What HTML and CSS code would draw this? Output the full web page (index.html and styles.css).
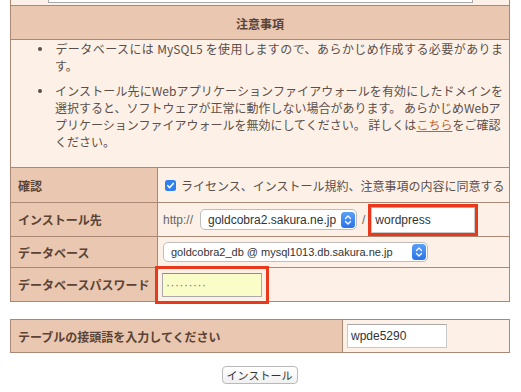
FILE: index.html
```html
<!DOCTYPE html>
<html lang="ja">
<head>
<meta charset="utf-8">
<title>インストール</title>
<link rel="stylesheet" href="styles.css">
</head>
<body>
<div class="page">
  <div class="panel panel-main">
    <div class="top-row"><div class="textarea"></div></div>
    <div class="head">注意事項</div>
    <div class="notes">
      <ul>
        <li>データベースには MySQL5 を使用しますので、あらかじめ作成する必要があります。</li>
        <li>インストール先にWebアプリケーションファイアウォールを有効にしたドメインを選択すると、ソフトウェアが正常に動作しない場合があります。 あらかじめWebア<br>プリケーションファイアウォールを無効にしてください。 詳しくは<a href="#" class="link">こちら</a>をご確認<br>ください。</li>
      </ul>
    </div>
    <div class="form-grid">
      <div class="label">確認</div>
      <div class="value">
        <span class="checkbox"><svg width="11" height="11" viewBox="0 0 11 11"><rect x="0" y="0" width="11" height="11" rx="2.5" fill="#2f7fef"/><path d="M2.8 5.7 L4.7 7.6 L8.3 3.4" fill="none" stroke="#fff" stroke-width="1.6" stroke-linecap="round" stroke-linejoin="round"/></svg></span>
        <span class="agree">ライセンス、インストール規約、注意事項の内容に同意する</span>
      </div>

      <div class="label">インストール先</div>
      <div class="value">
        <span class="prefix">http://</span>
        <span class="select select-domain"><span class="select-text">goldcobra2.sakura.ne.jp</span><span class="stepper"><svg width="14" height="16" viewBox="0 0 14 16"><defs><linearGradient id="sg1" x1="0" y1="0" x2="0" y2="1"><stop offset="0" stop-color="#5aa0f7"/><stop offset="1" stop-color="#2a72e8"/></linearGradient></defs><rect width="14" height="16" rx="3.5" fill="url(#sg1)"/><path d="M4.5 6.5 L7 4 L9.5 6.5 M4.5 9.5 L7 12 L9.5 9.5" fill="none" stroke="#fff" stroke-width="1.3" stroke-linecap="round" stroke-linejoin="round"/></svg></span></span>
        <span class="slash">/</span>
        <input class="text-input input-dir hl" type="text" value="wordpress">
      </div>

      <div class="label">データベース</div>
      <div class="value">
        <span class="select select-db"><span class="select-text">goldcobra2_db @ mysql1013.db.sakura.ne.jp</span><span class="stepper"><svg width="14" height="16" viewBox="0 0 14 16"><defs><linearGradient id="sg2" x1="0" y1="0" x2="0" y2="1"><stop offset="0" stop-color="#5aa0f7"/><stop offset="1" stop-color="#2a72e8"/></linearGradient></defs><rect width="14" height="16" rx="3.5" fill="url(#sg2)"/><path d="M4.5 6.5 L7 4 L9.5 6.5 M4.5 9.5 L7 12 L9.5 9.5" fill="none" stroke="#fff" stroke-width="1.3" stroke-linecap="round" stroke-linejoin="round"/></svg></span></span>
      </div>

      <div class="label">データベースパスワード</div>
      <div class="value">
        <input class="text-input input-pass hl hl-pass" type="text" value="·········">
      </div>
    </div>
  </div>

  <div class="panel panel-prefix">
    <div class="label label-wide">テーブルの接頭語を入力してください</div>
    <div class="value value-prefix">
      <input class="text-input input-prefix" type="text" value="wpde5290">
    </div>
  </div>

  <div class="actions">
    <button class="btn" type="button">インストール</button>
  </div>
</div>
</body>
</html>
```

FILE: styles.css
```css
* {
  box-sizing: border-box;
}

body {
  margin: 0;
  background: #ffffff;
  font-family: "Noto Sans CJK JP", "Noto Sans", sans-serif;
  font-size: 12px;
  color: #5a4f4a;
}

.page {
  width: 510px;
  padding-left: 10px;
}

.panel {
  width: 500px;
  border: 1px solid #ab8876;
  background: #fdf1e7;
}

.panel-main {
  margin-top: -20px;
}

.top-row {
  height: 24px;
  display: flex;
  align-items: flex-end;
  padding: 0 36px 2px 37px;
}

.textarea {
  flex: 1;
  height: 12px;
  background: #ffffff;
  border: 1px solid #a9a9a9;
  border-top: none;
}

.head {
  height: 34px;
  border-top: 1px solid #ab8876;
  background: #e9c7b0;
  display: flex;
  align-items: center;
  justify-content: center;
  font-weight: bold;
  color: #5b4234;
  padding-top: 1px;
}

.notes {
  height: 128px;
  border-top: 1px solid #ab8876;
  padding: 0 6px 0 44px;
}

.notes ul {
  margin: 0;
  padding: 0;
  list-style: none;
}

.notes li {
  line-height: 17px;
  margin-bottom: 8px;
  text-align: justify;
}

.notes li::before {
  content: "";
  display: inline-block;
  width: 4px;
  height: 4px;
  border-radius: 50%;
  background: #5a4f4a;
  margin-left: -17px;
  margin-right: 13px;
  vertical-align: 3px;
}

.link {
  color: #c4622c;
  text-decoration: underline;
}

.form-grid {
  display: grid;
  grid-template-columns: 147px 1fr;
  grid-template-rows: 35px 34px 31px 34px;
}

.label {
  border-top: 1px solid #ab8876;
  border-right: 1px solid #ab8876;
  background: #e9c7b0;
  display: flex;
  align-items: center;
  padding-left: 7px;
  font-weight: bold;
  color: #5b4234;
}

.value {
  border-top: 1px solid #ab8876;
  display: flex;
  align-items: center;
  padding-left: 5px;
}

.checkbox {
  display: flex;
  margin-left: 2px;
  margin-right: 5px;
}

.agree {
  color: #5a4f4a;
}

.prefix {
  font-family: "Liberation Sans", "Noto Sans", sans-serif;
  color: #666666;
  width: 37px;
}

.select {
  display: inline-flex;
  align-items: center;
  height: 21px;
  background: #ffffff;
  border: 1px solid #bdbdbd;
  border-radius: 5px;
  padding: 0 1px 0 7px;
  color: #333333;
  font-family: "Liberation Sans", "Noto Sans", sans-serif;
  font-size: 12px;
}

.select-text {
  flex: 1;
  white-space: nowrap;
}

.stepper {
  display: flex;
}

.select-domain {
  width: 157px;
}

.select-db {
  width: 265px;
  height: 20px;
  font-size: 11px;
}

.slash {
  font-family: "Liberation Sans", "Noto Sans", sans-serif;
  color: #666666;
  margin: 0 6px 0 5px;
}

.text-input {
  font-family: "Liberation Sans", "Noto Sans", sans-serif;
  font-size: 12px;
  color: #333333;
  background: #ffffff;
  border: 1px solid #c9c9c9;
  border-top-color: #a9a9a9;
  padding: 0 3px;
  margin: 0;
  border-radius: 0;
}

.input-dir {
  width: 104px;
  height: 26px;
}

.input-pass {
  width: 100px;
  height: 24px;
  background: #fbfdc9;
  border-color: #aaaaaa;
  border-top-color: #8d8d8d;
  color: #777777;
  letter-spacing: 0.5px;
  margin-left: -1px;
}

.hl {
  outline: 3px solid #e8391d;
  outline-offset: 0;
}

.hl-pass {
  outline-offset: 4px;
}

.panel-prefix {
  margin-top: 17px;
  height: 34px;
  display: grid;
  grid-template-columns: 332px 1fr;
}

.panel-prefix .label,
.panel-prefix .value {
  border-top: none;
}

.value-prefix {
  padding-left: 4px;
}

.input-prefix {
  width: 100px;
  height: 24px;
}

.actions {
  display: flex;
  justify-content: center;
  margin-top: 13px;
  width: 500px;
}

.btn {
  width: 76px;
  height: 18px;
  padding: 0;
  margin-left: -1px;
  font-family: "Noto Sans CJK JP", sans-serif;
  font-size: 11px;
  line-height: 16px;
  color: #333333;
  background: linear-gradient(#ffffff, #f0f0f0);
  border: 1px solid #b9b9b9;
  border-radius: 4px;
}
```
